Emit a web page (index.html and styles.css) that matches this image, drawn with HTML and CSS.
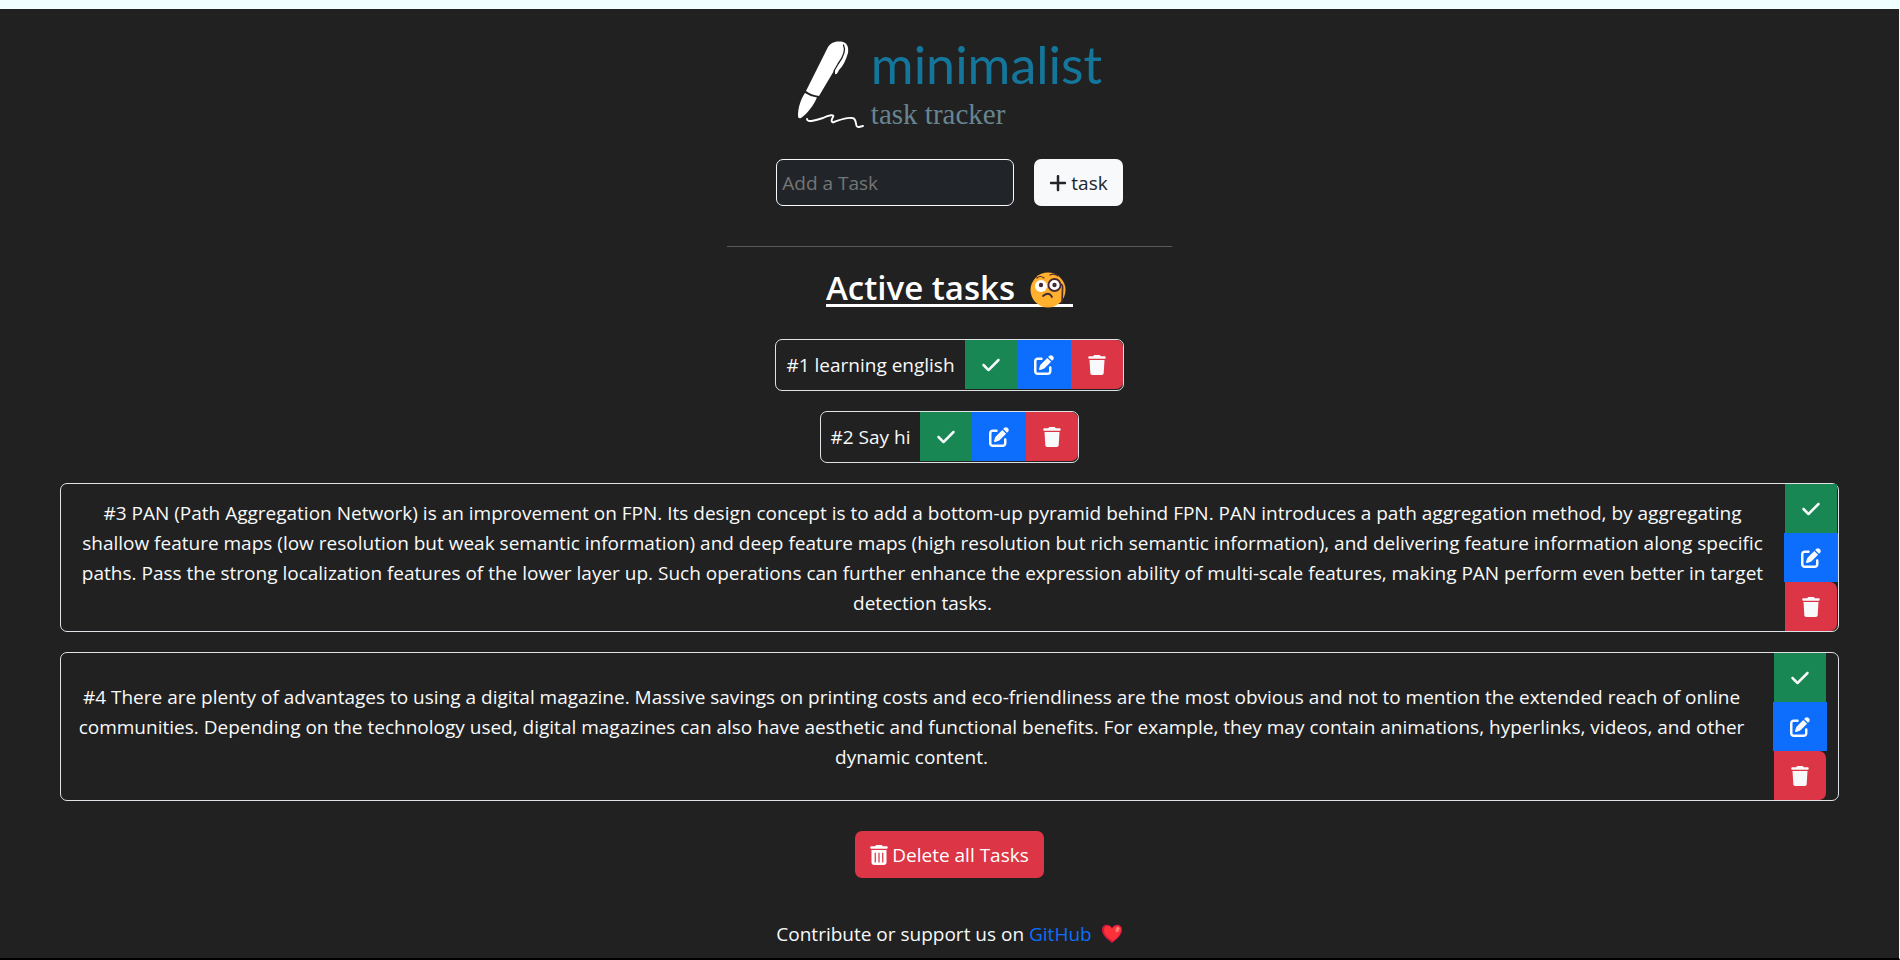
FILE: index.html
```html
<!DOCTYPE html>
<html lang="en">
<head>
<meta charset="utf-8">
<title>Minimalist task tracker</title>
<link rel="stylesheet" href="styles.css">
</head>
<body>
<svg class="sprite" aria-hidden="true">
  <symbol id="check" viewBox="0 0 448 512"><path d="M438.600 105.400c12.500 12.500 12.500 32.800 0 45.300l-256 256c-12.500 12.500-32.800 12.500-45.300 0l-128-128c-12.500-12.500-12.500-32.800 0-45.300s32.800-12.500 45.300 0L160 338.700 393.400 105.400c12.500-12.500 32.800-12.500 45.300 0z"/></symbol>
  <symbol id="edit" viewBox="0 0 512 512"><path d="M471.600 21.700c-21.900-21.900-57.300-21.900-79.200 0L362.300 51.700l97.900 97.900 30.100-30.100c21.900-21.900 21.900-57.300 0-79.200L471.600 21.700zm-299.200 220c-6.100 6.100-10.800 13.600-13.500 21.900l-29.600 88.800c-2.900 8.600-.6 18.100 5.800 24.600s15.900 8.700 24.600 5.800l88.800-29.600c8.200-2.700 15.700-7.400 21.900-13.500L437.700 172.300 339.700 74.300 172.400 241.700zM96 64C43 64 0 107 0 160V416c0 53 43 96 96 96H352c53 0 96-43 96-96V320c0-17.700-14.300-32-32-32s-32 14.300-32 32v96c0 17.700-14.300 32-32 32H96c-17.700 0-32-14.300-32-32V160c0-17.700 14.300-32 32-32h96c17.700 0 32-14.300 32-32s-14.300-32-32-32H96z"/></symbol>
  <symbol id="trash" viewBox="0 0 448 512"><path d="M135.200 17.700L128 32H32C14.300 32 0 46.300 0 64S14.300 96 32 96H416c17.700 0 32-14.300 32-32s-14.300-32-32-32H320l-7.200-14.300C307.400 6.800 296.300 0 284.200 0H163.800c-12.100 0-23.200 6.800-28.600 17.700zM416 128H32L53.200 467c1.600 25.300 22.600 45 47.900 45H346.900c25.300 0 46.300-19.700 47.900-45L416 128z"/></symbol>
  <symbol id="trash-can" viewBox="0 0 448 512"><path fill-rule="evenodd" d="M135.200 17.700C140.600 6.800 151.700 0 163.800 0H284.200c12.100 0 23.200 6.800 28.600 17.700L320 32h96c17.700 0 32 14.300 32 32s-14.300 32-32 32H32C14.300 96 0 81.700 0 64S14.300 32 32 32h96zM32 128H416V448c0 35.300-28.700 64-64 64H96c-35.300 0-64-28.700-64-64zM128 192c-8.800 0-16 7.200-16 16V432c0 8.800 7.200 16 16 16s16-7.200 16-16V208c0-8.800-7.200-16-16-16zM224 192c-8.800 0-16 7.200-16 16V432c0 8.800 7.200 16 16 16s16-7.200 16-16V208c0-8.800-7.200-16-16-16zM320 192c-8.800 0-16 7.200-16 16V432c0 8.800 7.200 16 16 16s16-7.200 16-16V208c0-8.800-7.200-16-16-16z"/></symbol>
  <symbol id="plus" viewBox="0 0 448 512"><path d="M256 80c0-17.700-14.300-32-32-32s-32 14.300-32 32V224H48c-17.700 0-32 14.300-32 32s14.300 32 32 32H192V432c0 17.700 14.300 32 32 32s32-14.300 32-32V288H400c17.700 0 32-14.300 32-32s-14.300-32-32-32H256V80z"/></symbol>
</svg>

<header class="logo">
  <svg class="logo-pen" viewBox="0 0 68 88" aria-hidden="true">
    <path fill="#fff" d="M31 6C34 1 39 0 44 0.500C50 1 52 6 51 12C49 19 46 25 42 29Q40 34 38 33L38 28L22 55Q14 54 9 50Z"/>
    <path fill="none" stroke="#212121" stroke-width="1.300" stroke-linecap="round" d="M46.500 4C49 9 47 15 41 23L37 30"/>
    <path fill="#fff" d="M8 52Q14 56 20 56.500C17 64 10 73 4 77Q1 78 1 75C1 66 4 58 8 52Z"/>
    <path fill="none" stroke="#fff" stroke-width="1.900" stroke-linecap="round" stroke-linejoin="round" d="M10 78C10 82 20 79 26 77C32 74 38 73 36 76C34 79 34 82 37 81C43 79 49 76 55 77C61 77 57 87 62 86L66 85"/>
  </svg>
  <div class="logo-text">
    <span class="logo-name">minimalist</span>
    <span class="logo-tag">task tracker</span>
  </div>
</header>

<main class="page">
  <form class="add-form">
    <input class="add-input" type="text" placeholder="Add a Task" aria-label="Add a Task">
    <button class="btn btn-light" type="button"><svg class="icon"><use href="#plus"/></svg>task</button>
  </form>

  <hr class="divider">

  <h1 class="title"><span class="title-line">Active tasks
    <svg class="emoji" viewBox="0 0 36 36" aria-hidden="true">
      <circle cx="18" cy="18" r="17.500" fill="#ffb02e"/>
      <path d="M7 6Q10 3 14 6M20 3Q24 1 28 4" fill="none" stroke="#4a2b32" stroke-width="1.200" stroke-linecap="round"/>
      <circle cx="11" cy="14" r="6" fill="#fff"/><circle cx="11" cy="13" r="2.200" fill="#402a32"/>
      <circle cx="24.500" cy="13" r="6" fill="#fff" stroke="#4a2b32" stroke-width="1.800"/><circle cx="24.500" cy="13" r="2.200" fill="#402a32"/>
      <path d="M31 12Q33 13 32.500 18L32 31" fill="none" stroke="#4a2b32" stroke-width="1.700"/>
      <path d="M13 24Q19 19 22 25" fill="none" stroke="#402a32" stroke-width="1.800" stroke-linecap="round"/>
    </svg></span></h1>

  <ul class="tasks">
    <li class="task">
      <p class="task-text">#1 learning english</p>
      <div class="actions">
        <button class="act act-done" aria-label="Done"><svg class="icon"><use href="#check"/></svg></button>
        <button class="act act-edit" aria-label="Edit"><svg class="icon icon-wide"><use href="#edit"/></svg></button>
        <button class="act act-delete" aria-label="Delete"><svg class="icon"><use href="#trash"/></svg></button>
      </div>
    </li>
    <li class="task">
      <p class="task-text">#2 Say hi</p>
      <div class="actions">
        <button class="act act-done" aria-label="Done"><svg class="icon"><use href="#check"/></svg></button>
        <button class="act act-edit" aria-label="Edit"><svg class="icon icon-wide"><use href="#edit"/></svg></button>
        <button class="act act-delete" aria-label="Delete"><svg class="icon"><use href="#trash"/></svg></button>
      </div>
    </li>
    <li class="task task-long">
      <p class="task-text">#3 PAN (Path Aggregation Network) is an improvement on FPN. Its design concept is to add a bottom-up pyramid behind FPN. PAN introduces a path aggregation method, by aggregating shallow feature maps (low resolution but weak semantic information) and deep feature maps (high resolution but rich semantic information), and delivering feature information along specific paths. Pass the strong localization features of the lower layer up. Such operations can further enhance the expression ability of multi-scale features, making PAN perform even better in target detection tasks.</p>
      <div class="actions">
        <button class="act act-done" aria-label="Done"><svg class="icon"><use href="#check"/></svg></button>
        <button class="act act-edit" aria-label="Edit"><svg class="icon icon-wide"><use href="#edit"/></svg></button>
        <button class="act act-delete" aria-label="Delete"><svg class="icon"><use href="#trash"/></svg></button>
      </div>
    </li>
    <li class="task task-long task-inset">
      <p class="task-text">#4 There are plenty of advantages to using a digital magazine. Massive savings on printing costs and eco-friendliness are the most obvious and not to mention the extended reach of online communities. Depending on the technology used, digital magazines can also have aesthetic and functional benefits. For example, they may contain animations, hyperlinks, videos, and other dynamic content.</p>
      <div class="actions">
        <button class="act act-done" aria-label="Done"><svg class="icon"><use href="#check"/></svg></button>
        <button class="act act-edit" aria-label="Edit"><svg class="icon icon-wide"><use href="#edit"/></svg></button>
        <button class="act act-delete" aria-label="Delete"><svg class="icon"><use href="#trash"/></svg></button>
      </div>
    </li>
  </ul>

  <button class="btn btn-danger" type="button"><svg class="icon"><use href="#trash-can"/></svg>Delete all Tasks</button>
</main>

<footer class="footer">
  <span>Contribute or support us on <a class="link" href="#">GitHub</a></span>
  <svg class="heart" viewBox="0 0 22 20" aria-hidden="true">
    <path fill="#d3183f" d="M11 19C6 15 1 11 1 6C1 0 8 -1 11 4C14 -1 21 0 21 6C21 11 16 15 11 19Z"/>
    <path fill="#fb3038" d="M12 17C7 14 3 11 3 6C3 1 9 0 11 5C14 0 21 1 20 7C19 11 16 14 12 17Z"/>
    <ellipse cx="16.500" cy="5.500" rx="1.800" ry="2.800" fill="#ff7f72" transform="rotate(25 16.500 5.500)"/>
  </svg>
</footer>
</body>
</html>
```

FILE: styles.css
```css
* { box-sizing: border-box; }

body {
  margin: 0;
  min-height: 100vh;
  display: flex;
  flex-direction: column;
  align-items: center;
  background: #212121;
  border-top: 9px solid #f0ffff;
  border-right: 1px solid #f0ffff;
  border-bottom: 2px solid #000;
  color: #f8f9fa;
  font-family: "Open Sans", "Noto Sans", sans-serif;
  font-size: 19px;
  line-height: 30px;
}

.sprite { display: none; }

.icon { width: 18px; height: 20px; fill: currentColor; flex: none; }
.icon-wide { width: 20px; }

.logo { display: flex; gap: 6px; padding: 32px 0 30px; }
.logo-pen { width: 68px; height: 88px; }
.logo-text { display: flex; flex-direction: column; gap: 12px; }
.logo-name {
  color: #14769b;
  font-family: Lato, sans-serif;
  font-size: 52px;
  line-height: 46px;
}
.logo-tag {
  color: #678591;
  font-family: "Liberation Serif", serif;
  font-size: 29px;
  line-height: 30px;
}

.page {
  width: 100%;
  padding: 0 60px;
  display: flex;
  flex-direction: column;
  align-items: center;
}

.add-form { display: flex; gap: 20px; }
.add-input {
  width: 238px;
  height: 47px;
  padding: 0 5px;
  background: #212529;
  border: 1px solid #f8f9fa;
  border-radius: 7px;
  color: #f8f9fa;
  font: inherit;
}
.add-input::placeholder { color: #757575; opacity: 1; }

.btn {
  height: 47px;
  padding: 0 15px;
  display: flex;
  align-items: center;
  gap: 4px;
  border: 0;
  border-radius: 7px;
  font: inherit;
}
.btn-light { background: #f8f9fa; color: #212529; }
.btn-danger { background: #dc3545; color: #fff; }

.divider {
  width: 445px;
  margin: 40px 0 25px;
  border: 0;
  border-top: 1px solid #5a5a5a;
}

.title { margin: 0 0 32px; font-size: 33px; font-weight: 600; line-height: 32px; color: #fff; }
.title-line {
  display: flex;
  gap: 15px;
  height: 35px;
  padding-right: 7px;
  border-bottom: 3px solid #fff;
}
.emoji { width: 36px; height: 36px; }

.tasks {
  width: 100%;
  margin: 0 0 30px;
  padding: 0;
  list-style: none;
  display: flex;
  flex-direction: column;
  align-items: center;
  gap: 20px;
}
.task {
  min-height: 52px;
  display: flex;
  align-items: center;
  border: 1px solid #dee2e6;
  border-radius: 7px;
  text-align: center;
}
.task-text { margin: 0; padding: 0 10px; }
.task-long { width: 100%; }
.task-long .task-text { flex: 1; }
.task-inset { padding-right: 11px; }
.task-inset .task-text { margin-right: 11px; }

.actions { display: flex; align-self: flex-start; }
.task-long .actions { flex-direction: column; align-items: center; }
.act {
  height: 49px;
  padding: 0 17px;
  display: flex;
  align-items: center;
  border: 0;
  color: #f8f9fa;
}
.act-done { background: #198754; }
.act-edit { background: #0d6efd; }
.act-delete { background: #dc3545; border-radius: 0 7px 7px 0; }

.footer {
  display: flex;
  align-items: center;
  gap: 9px;
  padding: 41px 0 9px;
}
.link { color: #0d6efd; text-decoration: none; }
.heart { width: 22px; height: 20px; }
```
